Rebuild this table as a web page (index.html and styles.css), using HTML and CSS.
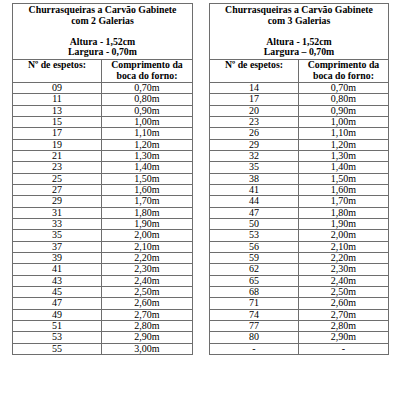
FILE: index.html
```html
<!DOCTYPE html>
<html>
<head>
<meta charset="utf-8">
<link rel="stylesheet" href="styles.css">
</head>
<body>
<div class="page">
  <table class="tbl">
    <colgroup><col class="c1"><col class="c2"></colgroup>
    <tr class="title"><th colspan="2">Churrasqueiras a Carvão Gabinete<br>com 2 Galerias<br><br>Altura - 1,52cm<br>Largura - 0,70m</th></tr>
    <tr class="head"><th>Nº de espetos:</th><th>Comprimento da<br>boca do forno:</th></tr>
    <tr><td>09</td><td>0,70m</td></tr>
    <tr><td>11</td><td>0,80m</td></tr>
    <tr><td>13</td><td>0,90m</td></tr>
    <tr><td>15</td><td>1,00m</td></tr>
    <tr><td>17</td><td>1,10m</td></tr>
    <tr><td>19</td><td>1,20m</td></tr>
    <tr><td>21</td><td>1,30m</td></tr>
    <tr><td>23</td><td>1,40m</td></tr>
    <tr><td>25</td><td>1,50m</td></tr>
    <tr><td>27</td><td>1,60m</td></tr>
    <tr><td>29</td><td>1,70m</td></tr>
    <tr><td>31</td><td>1,80m</td></tr>
    <tr><td>33</td><td>1,90m</td></tr>
    <tr><td>35</td><td>2,00m</td></tr>
    <tr><td>37</td><td>2,10m</td></tr>
    <tr><td>39</td><td>2,20m</td></tr>
    <tr><td>41</td><td>2,30m</td></tr>
    <tr><td>43</td><td>2,40m</td></tr>
    <tr><td>45</td><td>2,50m</td></tr>
    <tr><td>47</td><td>2,60m</td></tr>
    <tr><td>49</td><td>2,70m</td></tr>
    <tr><td>51</td><td>2,80m</td></tr>
    <tr><td>53</td><td>2,90m</td></tr>
    <tr><td>55</td><td>3,00m</td></tr>
  </table>
  <table class="tbl tbl-r">
    <colgroup><col class="c1"><col class="c2"></colgroup>
    <tr class="title"><th colspan="2">Churrasqueiras a Carvão Gabinete<br>com 3 Galerias<br><br>Altura - 1,52cm<br>Largura – 0,70m</th></tr>
    <tr class="head"><th>Nº de espetos:</th><th>Comprimento da<br>boca do forno:</th></tr>
    <tr><td>14</td><td>0,70m</td></tr>
    <tr><td>17</td><td>0,80m</td></tr>
    <tr><td>20</td><td>0,90m</td></tr>
    <tr><td>23</td><td>1,00m</td></tr>
    <tr><td>26</td><td>1,10m</td></tr>
    <tr><td>29</td><td>1,20m</td></tr>
    <tr><td>32</td><td>1,30m</td></tr>
    <tr><td>35</td><td>1,40m</td></tr>
    <tr><td>38</td><td>1,50m</td></tr>
    <tr><td>41</td><td>1,60m</td></tr>
    <tr><td>44</td><td>1,70m</td></tr>
    <tr><td>47</td><td>1,80m</td></tr>
    <tr><td>50</td><td>1,90m</td></tr>
    <tr><td>53</td><td>2,00m</td></tr>
    <tr><td>56</td><td>2,10m</td></tr>
    <tr><td>59</td><td>2,20m</td></tr>
    <tr><td>62</td><td>2,30m</td></tr>
    <tr><td>65</td><td>2,40m</td></tr>
    <tr><td>68</td><td>2,50m</td></tr>
    <tr><td>71</td><td>2,60m</td></tr>
    <tr><td>74</td><td>2,70m</td></tr>
    <tr><td>77</td><td>2,80m</td></tr>
    <tr><td>80</td><td>2,90m</td></tr>
    <tr><td>-</td><td>-</td></tr>
  </table>
</div>
</body>
</html>
```
FILE: styles.css
```css
html, body {
  margin: 0;
  padding: 0;
  background: #ffffff;
}
.page {
  display: flex;
  align-items: flex-start;
  gap: 16px;
  padding: 3px 0 0 12px;
  font-family: "Liberation Serif", "Times New Roman", serif;
  color: #000;
}
.tbl {
  border-collapse: collapse;
  table-layout: fixed;
  width: 181px;
  border: 1px solid #6e6e6e;
}
.tbl-r {
  width: 180px;
}
.c1 { width: 89px; }
.tbl th, .tbl td {
  border: 1px solid #6e6e6e;
  padding: 0;
  text-align: center;
  vertical-align: middle;
}
.tbl th {
  font-weight: bold;
  font-size: 9.8px;
  line-height: 10.5px;
}
.tbl tr.title th {
  height: 54px;
  padding-top: 1px;
  vertical-align: top;
}
.tbl tr.head th {
  height: 22px;
  vertical-align: top;
}
.tbl td {
  font-size: 10px;
  line-height: 10px;
  height: 10.33px;
}
```
